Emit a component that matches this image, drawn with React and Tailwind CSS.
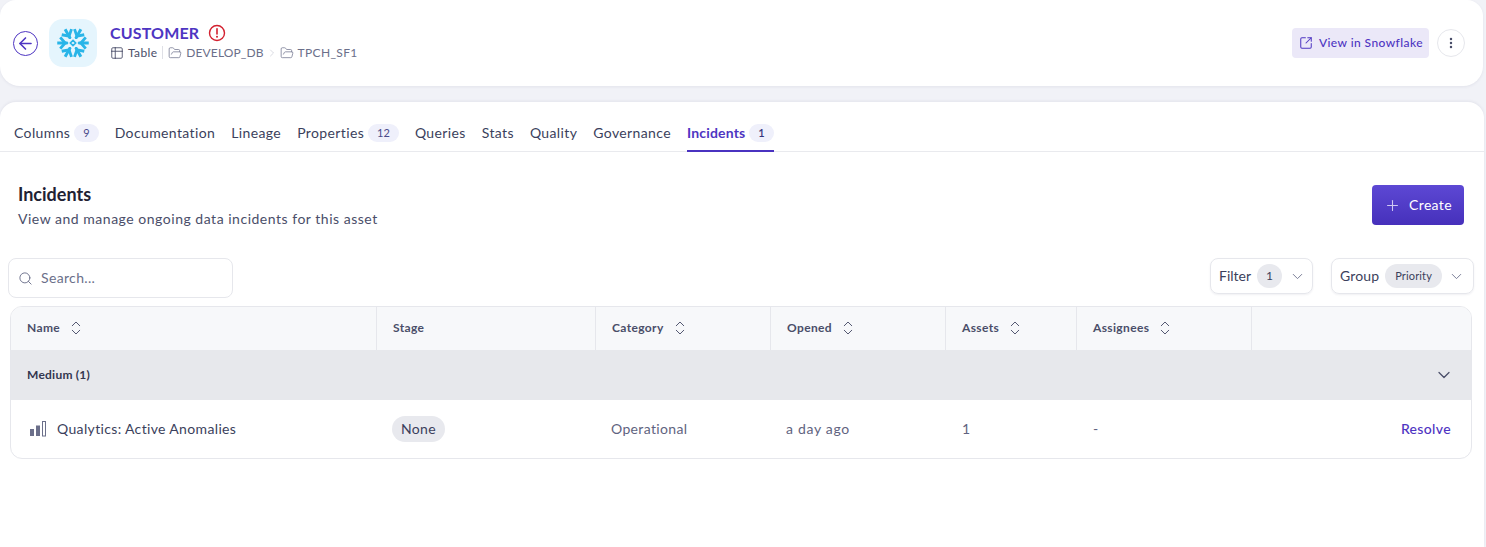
import React from "react";
import { ArrowLeft, Table2, FolderOpen, ChevronRight, ChevronDown, ChevronsUpDown, SquareArrowOutUpRight, EllipsisVertical, Plus, Search } from "lucide-react";

const font = "font-['Lato','Noto_Sans',sans-serif]";

function Snowflake() {
  const arm = (a) => (
    <g key={a} transform={`rotate(${a} 24 24)`}>
      <path d="M22 3 H26 V16.5 L24 18 L22 16.5 Z" fill="#29b5e8" />
      <path d="M16.5 7 L24 13.5 L31.5 7" stroke="#29b5e8" strokeWidth="3.8" fill="none" strokeLinejoin="miter" />
    </g>
  );
  return (
    <svg width="36" height="36" viewBox="0 0 48 48" fill="none">
      {[30, 90, 150, 210, 270, 330].map(arm)}
      <circle cx="24" cy="24" r="5.6" fill="#e5f5fd" />
      <path d="M24 20.5 L27.5 24 L24 27.5 L20.5 24 Z" stroke="#29b5e8" strokeWidth="2.2" />
    </svg>
  );
}

function Bars() {
  return (
    <svg width="18" height="18" viewBox="0 0 18 18">
      <rect x="1" y="9" width="4" height="7" fill="#6b6f8a" />
      <rect x="7" y="5.5" width="4" height="10.5" fill="#6b6f8a" />
      <rect x="13.5" y="1.5" width="3" height="14.5" fill="none" stroke="#6b6f8a" strokeWidth="1" />
    </svg>
  );
}

const Count = ({ children, active }) => (
  <span className={`ml-1 flex h-[18px] min-w-6 items-center justify-center rounded-full bg-[#eff0fb] px-[9px] text-[11px] tracking-normal ${active ? "font-semibold text-[#34347a]" : "text-[#4a4a8a]"}`}>{children}</span>
);

const Tab = ({ label, count, active }) => (
  <div className={`relative flex h-[49px] items-center pt-[12px] ${active ? "font-bold tracking-[0.012em] text-[#4e35c2]" : "tracking-[0.027em] text-[#3b3f5c]"}`}>
    <span>{label}</span>
    {count && <Count active={active}>{count}</Count>}
    {active && <span className="absolute bottom-[-1px] left-0 right-0 h-[2px] bg-[#4a32c0]" />}
  </div>
);

const Head = ({ label, sort }) => (
  <div className="flex items-center gap-[7px] border-r border-[#e6e7ec] pb-px pl-4 text-xs font-bold tracking-[0.03em] text-[#4a4e69] last:border-r-0">
    <span>{label}</span>
    {sort && <ChevronsUpDown size={18} strokeWidth={1.25} className="text-[#4a4e69]" />}
  </div>
);

const cols = "grid-cols-[366px_219px_175px_175px_131px_175px_1fr]";

export default function App() {
  return (
    <div className={`${font} flex h-[547px] flex-col overflow-hidden bg-[#f1f2f7] text-sm tracking-[0.025em]`}>
      <header className="flex h-[86px] w-[1483px] items-center justify-between rounded-b-[20px] rounded-t-[16px] bg-white pl-[13px] pr-[18px] shadow-[0_1px_3px_rgba(60,60,100,0.08)]">
        <div className="flex items-center">
          <div className="flex h-[25px] w-[25px] items-center justify-center rounded-full border border-[#4e35c2] text-[#4e35c2]">
            <ArrowLeft size={19} strokeWidth={2} />
          </div>
          <div className="ml-[11px] flex h-12 w-12 items-center justify-center rounded-[14px] bg-[#e5f5fd]">
            <Snowflake />
          </div>
          <div className="mb-[5px] ml-[13px] flex flex-col">
            <div className="flex items-center gap-[9px] text-base font-bold leading-6 tracking-[0.01em] text-[#4e35c2]">
              CUSTOMER
              <svg width="18" height="18" viewBox="0 0 18 18" fill="none">
                <circle cx="9" cy="9" r="7.5" stroke="#d3202f" strokeWidth="1.4" />
                <path d="M9 4.8 V10" stroke="#d3202f" strokeWidth="1.6" strokeLinecap="round" />
                <circle cx="9" cy="12.8" r="1" fill="#d3202f" />
              </svg>
            </div>
            <div className="flex items-center text-xs leading-4 text-[#6b6f8a]">
              <Table2 size={14} strokeWidth={1.5} className="text-[#4a4e69]" />
              <span className="ml-1 text-[#4a4e69]">Table</span>
              <span className="mx-[5px] h-[13px] w-px bg-[#dfe0e6]" />
              <FolderOpen size={14} strokeWidth={1.25} />
              <span className="ml-1 tracking-[0.01em]">DEVELOP_DB</span>
              <ChevronRight size={12} strokeWidth={1} className="mx-[2px] text-[#b5b7c4]" />
              <FolderOpen size={14} strokeWidth={1.25} />
              <span className="ml-1">TPCH_SF1</span>
            </div>
          </div>
        </div>
        <div className="flex items-center gap-2">
          <div className="flex h-[30px] items-center gap-[6px] rounded-[4px] bg-[#ebe8f8] pl-[7px] pr-[6px] text-xs font-medium tracking-[0.035em] text-[#4e35c2]">
            <SquareArrowOutUpRight size={14} strokeWidth={1.75} />
            View in Snowflake
          </div>
          <div className="flex h-7 w-7 items-center justify-center rounded-full border border-[#e6e7ec] text-[#4a4e69]">
            <EllipsisVertical size={14} strokeWidth={2.25} />
          </div>
        </div>
      </header>

      <main className="mt-4 flex w-[1484px] flex-1 flex-col rounded-t-[16px] bg-white shadow-[0_-1px_3px_rgba(60,60,100,0.08)]">
        <nav className="flex gap-4 border-b border-[#e9eaee] pl-[14px]">
          <Tab label="Columns" count="9" />
          <Tab label="Documentation" />
          <Tab label="Lineage" />
          <Tab label="Properties" count="12" />
          <Tab label="Queries" />
          <Tab label="Stats" />
          <Tab label="Quality" />
          <Tab label="Governance" />
          <Tab label="Incidents" count="1" active />
        </nav>

        <section className="flex items-start justify-between pl-[18px] pr-5 pt-[32px]">
          <div>
            <h1 className="text-lg font-bold leading-[20px] tracking-normal text-[#1f2233]">Incidents</h1>
            <p className="mt-[5px] leading-5 tracking-[0.037em] text-[#4a4e69]">View and manage ongoing data incidents for this asset</p>
          </div>
          <button className="mt-px flex h-10 w-[92px] items-center justify-center gap-[8px] rounded-[4px] bg-gradient-to-b from-[#5d48d4] to-[#4630bb] text-white">
            <Plus size={17} strokeWidth={1.5} className="text-[#cfc8f3]" />
            Create
          </button>
        </section>

        <section className="mt-[29px] flex items-start justify-between pl-2 pr-[10px]">
          <div className="flex h-10 w-[225px] items-center gap-2 rounded-lg border border-[#e6e7ec] pl-[9px] text-[#6b6f8a]">
            <Search size={15} strokeWidth={1.5} />
            Search...
          </div>
          <div className="flex gap-[18px]">
            <div className="flex h-9 w-[103px] items-center rounded-lg border border-[#e6e7ec] pl-2 tracking-normal text-[#3b3f5c] shadow-[0_1px_2px_rgba(60,60,100,0.08)]">
              Filter
              <span className="ml-[6px] flex h-6 w-[25px] items-center justify-center rounded-full bg-[#e8e9ee] text-xs">1</span>
              <ChevronDown size={17} strokeWidth={1.25} className="ml-[7px] text-[#6b6f8a]" />
            </div>
            <div className="flex h-9 w-[143px] items-center rounded-lg border border-[#e6e7ec] pl-2 tracking-[0.01em] text-[#3b3f5c] shadow-[0_1px_2px_rgba(60,60,100,0.08)]">
              Group
              <span className="ml-[6px] flex h-6 items-center rounded-full bg-[#e8e9ee] px-[10px] text-[11px]">Priority</span>
              <ChevronDown size={17} strokeWidth={1.25} className="ml-[6px] text-[#6b6f8a]" />
            </div>
          </div>
        </section>

        <section className="ml-[10px] mt-2 w-[1462px] overflow-hidden rounded-xl border border-[#e6e7ec]">
          <div className={`grid h-[43px] bg-[#f7f8fa] ${cols}`}>
            <Head label="Name" sort />
            <Head label="Stage" />
            <Head label="Category" sort />
            <Head label="Opened" sort />
            <Head label="Assets" sort />
            <Head label="Assignees" sort />
            <Head label="" />
          </div>
          <div className="flex h-[50px] items-center justify-between bg-[#e7e8ec] pl-4 pr-[17px] text-xs font-bold tracking-[0.02em] text-[#33364f]">
            Medium (1)
            <ChevronDown size={20} strokeWidth={1.5} className="text-[#4a4e69]" />
          </div>
          <div className={`grid h-[58px] items-center text-[#4a4e69] ${cols}`}>
            <div className="flex items-center gap-[10px] pl-[18px] text-[#3b3f5c]">
              <Bars />
              Qualytics: Active Anomalies
            </div>
            <div className="pl-[15px]">
              <span className="inline-flex h-[26px] items-center rounded-full bg-[#e8e9ee] px-[9px] text-[#3b3f5c]">None</span>
            </div>
            <div className="pl-[15px] text-[#5f6380]">Operational</div>
            <div className="pl-[15px] tracking-[0.05em] text-[#5f6380]">a day ago</div>
            <div className="pl-4 text-[#5f6380]">1</div>
            <div className="pl-4 text-[#5f6380]">-</div>
            <div className="pr-5 text-right font-medium text-[#4e35c2]">Resolve</div>
          </div>
        </section>
      </main>
    </div>
  );
}
